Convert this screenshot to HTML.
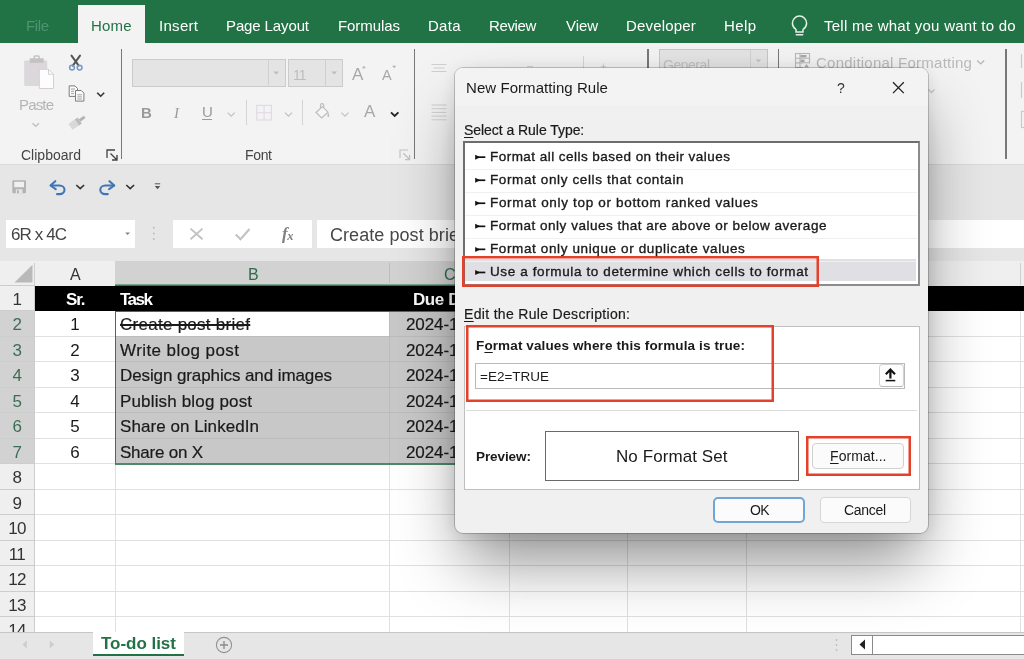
<!DOCTYPE html>
<html lang="en"><head><meta charset="utf-8"><title>New Formatting Rule</title>
<style>
html,body{margin:0;padding:0}
body{width:1024px;height:659px;overflow:hidden;background:#e6e6e6;position:relative;font-family:"Liberation Sans",sans-serif}
.a{position:absolute}
.t{position:absolute;white-space:pre;line-height:20px;height:20px;will-change:transform}
.t u{text-decoration-thickness:1px;text-underline-offset:2px}
svg{position:absolute;overflow:visible}
.hl{position:absolute;left:34px;width:990px;height:1px;background:#e0e0e0}
.vl{position:absolute;top:311px;width:1px;height:321px;background:#e0e0e0}
</style></head><body>
<!-- ===== header ===== -->
<div class="a" style="left:0;top:0;width:1024px;height:43px;background:#217346"></div>
<div class="a" style="left:77.5px;top:5px;width:67px;height:38px;background:#f3f3f3"></div>
<!-- ===== ribbon ===== -->
<div class="a" style="left:0;top:43px;width:1024px;height:121px;background:#f3f3f3;border-bottom:1px solid #dadada"></div>
<div class="a" style="left:120.5px;top:49px;width:1.5px;height:110px;background:#787878"></div>
<div class="a" style="left:413.5px;top:49px;width:1.5px;height:110px;background:#787878"></div>
<div class="a" style="left:647px;top:49px;width:1.5px;height:110px;background:#787878"></div>
<div class="a" style="left:777.5px;top:49px;width:1.5px;height:110px;background:#787878"></div>
<div class="a" style="left:1005px;top:49px;width:1.5px;height:110px;background:#787878"></div>
<!-- font boxes -->
<div class="a" style="left:132px;top:59px;width:154px;height:28px;background:#e4e4e4;border:1px solid #cbcbcb;box-sizing:border-box"></div>
<div class="a" style="left:268px;top:59px;width:1px;height:28px;background:#d0d0d0"></div>
<div class="a" style="left:288px;top:59px;width:55px;height:28px;background:#e4e4e4;border:1px solid #cbcbcb;box-sizing:border-box"></div>
<div class="a" style="left:325px;top:59px;width:1px;height:28px;background:#d0d0d0"></div>
<div class="a" style="left:659px;top:49px;width:109px;height:28px;background:#e3e3e3;border:1px solid #c6c6c6;box-sizing:border-box"></div>
<div class="a" style="left:750px;top:49.5px;width:1px;height:28px;background:#d0d0d0"></div>
<div class="a" style="left:245.5px;top:100px;width:1px;height:25px;background:#d4d4d4"></div>
<div class="a" style="left:302px;top:100px;width:1px;height:25px;background:#d4d4d4"></div>
<!-- ===== formula bar ===== -->
<div class="a" style="left:6px;top:219.5px;width:129px;height:28.5px;background:#fff"></div>
<div class="a" style="left:173px;top:219.5px;width:139px;height:28.5px;background:#fff"></div>
<div class="a" style="left:316.5px;top:219.5px;width:708px;height:28.5px;background:#fff"></div>
<!-- ===== grid ===== -->
<div class="a" style="left:34px;top:285px;width:990px;height:347px;background:#fff"></div>
<!-- col headers -->
<div class="a" style="left:0;top:261px;width:1024px;height:25px;background:#efefef"></div>
<div class="a" style="left:115px;top:261px;width:631px;height:23px;background:#d2d2d2"></div>
<div class="a" style="left:115px;top:284px;width:631px;height:1px;background:#7aa58f"></div><div class="a" style="left:115px;top:285px;width:631px;height:1px;background:#2f7a53"></div>
<div class="a" style="left:34px;top:263px;width:1px;height:22px;background:#cfcfcf"></div>
<div class="a" style="left:389px;top:263px;width:1px;height:20px;background:#bdbdbd"></div>
<div class="a" style="left:1019.5px;top:263px;width:1px;height:22px;background:#cfcfcf"></div>
<!-- row headers -->
<div class="a" style="left:0;top:285px;width:34.5px;height:347px;background:#efefef"></div>
<div class="a" style="left:0;top:311px;width:34px;height:153px;background:#d2d2d2"></div>
<div class="a" style="left:34px;top:311px;width:1px;height:153px;background:#2f7a53"></div>
<div class="hl" style="top:310px"></div>
<div class="a" style="left:0;top:310px;width:34px;height:1px;background:#cdcdcd"></div>
<div class="hl" style="top:336px"></div>
<div class="a" style="left:0;top:336px;width:34px;height:1px;background:#cdcdcd"></div>
<div class="hl" style="top:361px"></div>
<div class="a" style="left:0;top:361px;width:34px;height:1px;background:#cdcdcd"></div>
<div class="hl" style="top:387px"></div>
<div class="a" style="left:0;top:387px;width:34px;height:1px;background:#cdcdcd"></div>
<div class="hl" style="top:412px"></div>
<div class="a" style="left:0;top:412px;width:34px;height:1px;background:#cdcdcd"></div>
<div class="hl" style="top:438px"></div>
<div class="a" style="left:0;top:438px;width:34px;height:1px;background:#cdcdcd"></div>
<div class="hl" style="top:463px"></div>
<div class="a" style="left:0;top:463px;width:34px;height:1px;background:#cdcdcd"></div>
<div class="hl" style="top:489px"></div>
<div class="a" style="left:0;top:489px;width:34px;height:1px;background:#cdcdcd"></div>
<div class="hl" style="top:514px"></div>
<div class="a" style="left:0;top:514px;width:34px;height:1px;background:#cdcdcd"></div>
<div class="hl" style="top:540px"></div>
<div class="a" style="left:0;top:540px;width:34px;height:1px;background:#cdcdcd"></div>
<div class="hl" style="top:565px"></div>
<div class="a" style="left:0;top:565px;width:34px;height:1px;background:#cdcdcd"></div>
<div class="hl" style="top:591px"></div>
<div class="a" style="left:0;top:591px;width:34px;height:1px;background:#cdcdcd"></div>
<div class="hl" style="top:616px"></div>
<div class="a" style="left:0;top:616px;width:34px;height:1px;background:#cdcdcd"></div>
<div class="a" style="left:0;top:285px;width:34px;height:1px;background:#cdcdcd"></div>
<div class="vl" style="left:115px"></div>
<div class="vl" style="left:389px"></div>
<div class="vl" style="left:509px"></div>
<div class="vl" style="left:627px"></div>
<div class="vl" style="left:746px"></div>
<div class="vl" style="left:1019.5px"></div>
<div class="a" style="left:33.5px;top:285px;width:1px;height:347px;background:#cdcdcd"></div>
<!-- black header row -->
<div class="a" style="left:35px;top:286px;width:989px;height:25px;background:#000"></div>
<!-- selection -->
<div class="a" style="left:115px;top:311px;width:631px;height:153px;background:#c8c8c8"></div>
<div class="a" style="left:116px;top:311px;width:273px;height:25px;background:#fff"></div>
<div class="a" style="left:116px;top:336px;width:630px;height:1px;background:#bcbcbc"></div>
<div class="a" style="left:116px;top:361px;width:630px;height:1px;background:#bcbcbc"></div>
<div class="a" style="left:116px;top:387px;width:630px;height:1px;background:#bcbcbc"></div>
<div class="a" style="left:116px;top:412px;width:630px;height:1px;background:#bcbcbc"></div>
<div class="a" style="left:116px;top:438px;width:630px;height:1px;background:#bcbcbc"></div>
<div class="a" style="left:389px;top:311px;width:1px;height:152px;background:#bcbcbc"></div>
<div class="a" style="left:115px;top:311px;width:632px;height:154px;border:1px solid #2f7a53;border-bottom:2px solid #4d8a69;box-sizing:border-box"></div>
<span class="t" style="font-size:15px;color:#4f9371;letter-spacing:-0.39px;left:26.0px;top:15.5px;">File</span>
<span class="t" style="font-size:15px;color:#217346;letter-spacing:0.16px;left:91.0px;top:15.5px;">Home</span>
<span class="t" style="font-size:15px;color:#fff;letter-spacing:0.30px;left:159.3px;top:15.5px;">Insert</span>
<span class="t" style="font-size:15px;color:#fff;letter-spacing:-0.12px;left:226.3px;top:15.5px;">Page Layout</span>
<span class="t" style="font-size:15px;color:#fff;letter-spacing:-0.07px;left:338.3px;top:15.5px;">Formulas</span>
<span class="t" style="font-size:15px;color:#fff;letter-spacing:0.27px;left:428.2px;top:15.5px;">Data</span>
<span class="t" style="font-size:15px;color:#fff;letter-spacing:-0.38px;left:489.3px;top:15.5px;">Review</span>
<span class="t" style="font-size:15px;color:#fff;letter-spacing:-0.02px;left:565.7px;top:15.5px;">View</span>
<span class="t" style="font-size:15px;color:#fff;letter-spacing:0.18px;left:626.4px;top:15.5px;">Developer</span>
<span class="t" style="font-size:15px;color:#fff;letter-spacing:0.38px;left:724.0px;top:15.5px;">Help</span>
<span class="t" style="font-size:15px;color:#fff;letter-spacing:0.25px;left:824.0px;top:15.5px;">Tell me what you want to do</span>
<span class="t" style="font-size:15px;color:#b4b4b4;letter-spacing:-0.84px;left:19.0px;top:95.0px;">Paste</span>
<span class="t" style="font-size:14px;color:#444;letter-spacing:0.01px;left:20.5px;top:144.5px;">Clipboard</span>
<span class="t" style="font-size:14px;color:#444;letter-spacing:-0.34px;left:245.0px;top:144.5px;">Font</span>
<span class="t" style="font-size:14px;color:#bdbdbd;letter-spacing:-1.05px;left:292.5px;top:64.5px;">11</span>
<span class="t" style="font-size:15px;color:#9a9a9a;font-weight:700;letter-spacing:-1.34px;left:141.0px;top:102.5px;">B</span>
<span class="t" style="font-size:15px;color:#9a9a9a;font-style:italic;font-family:'Liberation Serif',serif;letter-spacing:1.00px;left:173.5px;top:102.5px;">I</span>
<span class="t" style="font-size:15px;color:#9a9a9a;text-decoration:underline;text-underline-offset:2px;letter-spacing:-0.84px;left:202.0px;top:102.0px;">U</span>
<span class="t" style="font-size:17px;color:#a8a8a8;letter-spacing:0.46px;left:364.4px;top:101.8px;">A</span>
<span class="t" style="font-size:17px;color:#a8a8a8;letter-spacing:-0.84px;left:352.0px;top:64.5px;">A</span>
<span class="t" style="font-size:14.5px;color:#a8a8a8;letter-spacing:-0.07px;left:382.4px;top:64.7px;">A</span>
<span class="t" style="font-size:14px;color:#bfbfbf;letter-spacing:-0.47px;left:663.0px;top:54.5px;">General</span>
<span class="t" style="font-size:15px;color:#b9b9b9;letter-spacing:0.24px;left:816.0px;top:53.0px;">Conditional Formatting</span>
<span class="t" style="font-size:17px;color:#444;letter-spacing:-0.90px;left:11.0px;top:224.5px;">6R x 4C</span>
<span class="t" style="font-size:18px;color:#484848;letter-spacing:0.06px;left:330.0px;top:224.5px;">Create post brief</span>
<span class="t" style="font-size:16px;color:#333;left:70.3px;top:264.5px;">A</span>
<span class="t" style="font-size:16px;color:#2f6b4c;left:247.8px;top:264.5px;">B</span>
<span class="t" style="font-size:16px;color:#2f6b4c;left:443.5px;top:264.5px;">C</span>
<span class="t" style="font-size:17px;color:#333;letter-spacing:-0.6px;left:17.0px;width:60px;margin-left:-30px;text-align:center;top:289.8px;">1</span>
<span class="t" style="font-size:17px;color:#3a6f55;letter-spacing:-0.6px;left:17.0px;width:60px;margin-left:-30px;text-align:center;top:315.2px;">2</span>
<span class="t" style="font-size:17px;color:#3a6f55;letter-spacing:-0.6px;left:17.0px;width:60px;margin-left:-30px;text-align:center;top:340.8px;">3</span>
<span class="t" style="font-size:17px;color:#3a6f55;letter-spacing:-0.6px;left:17.0px;width:60px;margin-left:-30px;text-align:center;top:366.2px;">4</span>
<span class="t" style="font-size:17px;color:#3a6f55;letter-spacing:-0.6px;left:17.0px;width:60px;margin-left:-30px;text-align:center;top:391.8px;">5</span>
<span class="t" style="font-size:17px;color:#3a6f55;letter-spacing:-0.6px;left:17.0px;width:60px;margin-left:-30px;text-align:center;top:417.2px;">6</span>
<span class="t" style="font-size:17px;color:#3a6f55;letter-spacing:-0.6px;left:17.0px;width:60px;margin-left:-30px;text-align:center;top:442.8px;">7</span>
<span class="t" style="font-size:17px;color:#333;letter-spacing:-0.6px;left:17.0px;width:60px;margin-left:-30px;text-align:center;top:468.2px;">8</span>
<span class="t" style="font-size:17px;color:#333;letter-spacing:-0.6px;left:17.0px;width:60px;margin-left:-30px;text-align:center;top:493.8px;">9</span>
<span class="t" style="font-size:17px;color:#333;letter-spacing:-0.6px;left:17.0px;width:60px;margin-left:-30px;text-align:center;top:519.2px;">10</span>
<span class="t" style="font-size:17px;color:#333;letter-spacing:-0.6px;left:17.0px;width:60px;margin-left:-30px;text-align:center;top:544.8px;">11</span>
<span class="t" style="font-size:17px;color:#333;letter-spacing:-0.6px;left:17.0px;width:60px;margin-left:-30px;text-align:center;top:570.2px;">12</span>
<span class="t" style="font-size:17px;color:#333;letter-spacing:-0.6px;left:17.0px;width:60px;margin-left:-30px;text-align:center;top:595.8px;">13</span>
<span class="t" style="font-size:17px;color:#333;letter-spacing:-0.6px;left:17.0px;width:60px;margin-left:-30px;text-align:center;top:621.2px;">14</span>
<span class="t" style="font-size:17px;color:#fff;font-weight:700;letter-spacing:-1.12px;left:65.5px;top:289.8px;">Sr.</span>
<span class="t" style="font-size:17px;color:#fff;font-weight:700;letter-spacing:-1.50px;left:120.0px;top:289.8px;">Task</span>
<span class="t" style="font-size:17px;color:#fff;font-weight:700;letter-spacing:-0.41px;left:412.6px;top:289.8px;">Due D</span>
<span class="t" style="font-size:17px;color:#1a1a1a;text-decoration:line-through;text-decoration-thickness:1.5px;-webkit-text-stroke:0.2px #1a1a1a;letter-spacing:0.27px;left:119.5px;top:315.2px;">Create post brief</span>
<span class="t" style="font-size:17px;color:#1a1a1a;left:75.0px;width:60px;margin-left:-30px;text-align:center;top:315.2px;">1</span>
<span class="t" style="font-size:17px;color:#1a1a1a;-webkit-text-stroke:0.2px #1a1a1a;letter-spacing:-0.09px;left:406.3px;top:315.2px;">2024-1</span>
<span class="t" style="font-size:17px;color:#1a1a1a;-webkit-text-stroke:0.2px #1a1a1a;letter-spacing:0.42px;left:119.5px;top:340.8px;">Write blog post</span>
<span class="t" style="font-size:17px;color:#1a1a1a;left:75.0px;width:60px;margin-left:-30px;text-align:center;top:340.8px;">2</span>
<span class="t" style="font-size:17px;color:#1a1a1a;-webkit-text-stroke:0.2px #1a1a1a;letter-spacing:-0.09px;left:406.3px;top:340.8px;">2024-1</span>
<span class="t" style="font-size:17px;color:#1a1a1a;-webkit-text-stroke:0.2px #1a1a1a;letter-spacing:-0.10px;left:119.5px;top:366.2px;">Design graphics and images</span>
<span class="t" style="font-size:17px;color:#1a1a1a;left:75.0px;width:60px;margin-left:-30px;text-align:center;top:366.2px;">3</span>
<span class="t" style="font-size:17px;color:#1a1a1a;-webkit-text-stroke:0.2px #1a1a1a;letter-spacing:-0.09px;left:406.3px;top:366.2px;">2024-1</span>
<span class="t" style="font-size:17px;color:#1a1a1a;-webkit-text-stroke:0.2px #1a1a1a;letter-spacing:0.16px;left:119.5px;top:391.8px;">Publish blog post</span>
<span class="t" style="font-size:17px;color:#1a1a1a;left:75.0px;width:60px;margin-left:-30px;text-align:center;top:391.8px;">4</span>
<span class="t" style="font-size:17px;color:#1a1a1a;-webkit-text-stroke:0.2px #1a1a1a;letter-spacing:-0.09px;left:406.3px;top:391.8px;">2024-1</span>
<span class="t" style="font-size:17px;color:#1a1a1a;-webkit-text-stroke:0.2px #1a1a1a;letter-spacing:0.06px;left:119.5px;top:417.2px;">Share on LinkedIn</span>
<span class="t" style="font-size:17px;color:#1a1a1a;left:75.0px;width:60px;margin-left:-30px;text-align:center;top:417.2px;">5</span>
<span class="t" style="font-size:17px;color:#1a1a1a;-webkit-text-stroke:0.2px #1a1a1a;letter-spacing:-0.09px;left:406.3px;top:417.2px;">2024-1</span>
<span class="t" style="font-size:17px;color:#1a1a1a;-webkit-text-stroke:0.2px #1a1a1a;letter-spacing:-0.23px;left:119.5px;top:442.8px;">Share on X</span>
<span class="t" style="font-size:17px;color:#1a1a1a;left:75.0px;width:60px;margin-left:-30px;text-align:center;top:442.8px;">6</span>
<span class="t" style="font-size:17px;color:#1a1a1a;-webkit-text-stroke:0.2px #1a1a1a;letter-spacing:-0.09px;left:406.3px;top:442.8px;">2024-1</span>
<!-- sheet tab bar -->
<div class="a" style="left:0;top:631.5px;width:1024px;height:28px;background:#e6e6e6;border-top:1px solid #c6c6c6;box-sizing:border-box"></div>
<div class="a" style="left:93px;top:631.5px;width:91px;height:22.5px;background:#fff;border-bottom:2.5px solid #217346"></div>
<div class="a" style="left:851px;top:634.5px;width:180px;height:20px;background:#fff;border:1px solid #8a8a8a;box-sizing:border-box"></div>
<div class="a" style="left:872px;top:635px;width:1px;height:20px;background:#8a8a8a"></div>
<svg width="1024" height="659" viewBox="0 0 1024 659" style="left:0;top:0" fill="none">
<!-- bulb -->
<g stroke="#e4f0e9" stroke-width="1.5" fill="none" stroke-linecap="round">
<path d="M796 29.5c-2.2-1.6-3.6-3.9-3.6-6.3a7.1 7.1 0 0 1 14.2 0c0 2.4-1.4 4.700-3.600 6.300v2.500h-7z"/>
<path d="M796.300 34.800h6.400"/>
</g>
<!-- paste -->
<rect x="24.200" y="60.500" width="23" height="25.500" rx="1" fill="#dbd7db"/>
<rect x="29.700" y="58.300" width="14" height="4.500" fill="#c4c2c4"/>
<rect x="34.200" y="56" width="5" height="4" rx="1" fill="none" stroke="#c4c2c4" stroke-width="1.400"/>
<path d="M39.300 69.300h9.200l5 5v14.200h-14.200z" fill="#fdfdfd" stroke="#d2d0d4" stroke-width="1"/>
<path d="M48.500 69.300v5h5" stroke="#d2d0d4" stroke-width="1" fill="none"/>
<path d="M32.500 123.200l3.200 3.200 3.200-3.200" stroke="#bdbdbd" stroke-width="1.300"/>
<!-- scissors -->
<path d="M71.500 55.600l7.200 10M80 55.600l-7.200 10" stroke="#555" stroke-width="2" stroke-linecap="round"/>
<circle cx="72" cy="67.600" r="2.400" stroke="#7398cc" stroke-width="1.500"/>
<circle cx="79.600" cy="67.600" r="2.400" stroke="#7398cc" stroke-width="1.500"/>
<!-- copy -->
<path d="M69.200 85.900h5.800l2.500 2.500v8h-8.300z" fill="#fafafa" stroke="#7c7c7c" stroke-width="1"/>
<path d="M75.500 90.500h5.800l2.600 2.600v8h-8.400z" fill="#fafafa" stroke="#7c7c7c" stroke-width="1"/>
<path d="M71 89h4M71 91.300h3M71 93.600h3M77.300 94.800h4.600M77.300 96.900h4.600M77.300 99h4.600" stroke="#8a8a8a" stroke-width=".8"/>
<path d="M97.200 92.700l3.500 3.500 3.500-3.500" stroke="#333" stroke-width="1.600"/>
<!-- format painter (disabled) -->
<path d="M68.500 124l7-5.200 4.200 6.200-7.200 4.800z" fill="#d8d8d8"/>
<path d="M75 119.300l2.600-1.900 4.200 6.200-2.600 1.900z" fill="#bcbcbc"/>
<path d="M78.800 119.300l5-3.600 1.700 2.400-5 3.600z" fill="#b4b4b4"/>
<!-- launchers -->
<path d="M107 158v-8h8" stroke="#444" stroke-width="1.300"/>
<path d="M110.500 153.500l6 6M117 155v5h-5" stroke="#444" stroke-width="1.400"/>
<path d="M400 158v-8h8" stroke="#c3c3c3" stroke-width="1.200"/>
<path d="M403.300 153.300l6 6M409.600 155v4.600h-4.600" stroke="#c3c3c3" stroke-width="1.300"/>
<!-- font box arrows -->
<path d="M273.300 71.500h5.800l-2.900 3z" fill="#bdbdbd"/>
<path d="M331.300 71.500h5.800l-2.900 3z" fill="#bdbdbd"/>
<path d="M755.500 59.500h5.800l-2.900 3z" fill="#c4c4c4"/>
<!-- A carets -->
<path d="M362 68.300l1.900-2.500 1.900 2.500z" fill="#b0b0b0"/>
<path d="M392.200 65.800h4l-2 2.400z" fill="#b0b0b0"/>
<!-- chevrons row 2 -->
<path d="M227.700 112.600l3.500 3.500 3.500-3.500" stroke="#c2c2c2" stroke-width="1.300"/>
<path d="M285 112.600l3.500 3.500 3.500-3.500" stroke="#c2c2c2" stroke-width="1.300"/>
<path d="M341.500 112.600l3.500 3.500 3.500-3.500" stroke="#c2c2c2" stroke-width="1.300"/>
<path d="M391 112.300l3.700 3.700 3.700-3.700" stroke="#222" stroke-width="1.800"/>
<!-- borders icon -->
<g stroke="#e0d8e4" stroke-width="1.100">
<rect x="256.800" y="105.400" width="14.600" height="14.600"/>
<path d="M264.100 105.400v14.600M256.800 112.700h14.600"/>
</g>
<!-- fill bucket -->
<g stroke="#bdbdbd" stroke-width="1.200" fill="none">
<path d="M316 112.500l6.500-6 5.500 5.700-6.300 5.800z" fill="#f6f6f6"/>
<path d="M320.500 108.500v-3.200a1.600 1.600 0 0 1 3.200 0v2.500"/>
<path d="M328.300 113.500v3.500" stroke-width="1.500"/>
</g>
<!-- align icons -->
<g stroke="#cfcfcf" stroke-width="1">
<path d="M431.500 64.500h15M433.500 68h11M431.500 71.500h15"/>
<path d="M431.500 105h15M431.500 108.700h15M431.500 112.400h15M431.500 116.100h15M431.500 119.800h15"/>
</g>
<!-- conditional formatting icon -->
<g stroke="#b9b9b9" stroke-width="1.100" fill="none">
<rect x="795.500" y="53.500" width="14" height="14"/>
<path d="M800 53.500v14M795.500 58.200h14M795.500 62.900h14"/>
</g>
<rect x="800.500" y="55" width="6" height="2.400" fill="#a9a9a9"/>
<rect x="800.500" y="59.600" width="4" height="2.400" fill="#a9a9a9"/>
<rect x="803" y="63.500" width="7.500" height="5" fill="#f3f3f3"/>
<path d="M804 67.500l2.500-3.500 2.500 3.500z" fill="#b0b0b0"/>
<path d="M977.200 60.500l3.500 3.400 3.500-3.400" stroke="#b5b5b5" stroke-width="1.300"/>
<path d="M928.500 89.500l3 3 3-3" stroke="#c5c5c5" stroke-width="1.300"/>
<!-- right edge partial icons -->
<g stroke="#c9c9c9" stroke-width="1.200">
<path d="M1021.500 54v14M1021.500 82v16"/>
<rect x="1021.500" y="111.500" width="8" height="16"/>
</g>
<!-- ribbon thin lines near number group -->
<path d="M583.500 56v12" stroke="#d6d6d6" stroke-width="1"/>
<path d="M527 66.500h6M603.500 63.500v5M601 66.500h5" stroke="#d0d0d0" stroke-width="1"/>
<!-- QAT: save -->
<rect x="12.300" y="180.300" width="13.700" height="13" rx="1" fill="#b4b4b4"/>
<rect x="14.300" y="181.800" width="9.700" height="5.400" fill="#f0f0f0"/>
<rect x="15.800" y="189.300" width="6.600" height="4" fill="#e6e6e6"/>
<rect x="17" y="190" width="1.800" height="3.300" fill="#b4b4b4"/>
<!-- undo / redo -->
<g stroke="#3f76b5" stroke-width="2.100" fill="none" stroke-linecap="round" stroke-linejoin="round">
<path d="M55.300 181.200l-4.800 4.300 5.200 3.600"/>
<path d="M51 185.500h8.500a5 4.300 0 0 1 0 8.600h-2.500"/>
<path d="M109.500 181.200l4.800 4.300-5.200 3.600"/>
<path d="M113.800 185.500h-8.500a5 4.300 0 0 0 0 8.600h2.500"/>
</g>
<path d="M76.300 185l3.900 3.700 3.900-3.700" stroke="#333" stroke-width="1.600"/>
<path d="M126.300 185l3.900 3.700 3.900-3.700" stroke="#333" stroke-width="1.600"/>
<path d="M154.800 183.800h5.400" stroke="#555" stroke-width="1"/>
<path d="M154.800 186h5.400l-2.700 3.300z" fill="#555"/>
<!-- name box arrow + dots -->
<path d="M125.200 232.400h4.800l-2.400 2.700z" fill="#808080"/>
<circle cx="153.800" cy="227.700" r="1" fill="#bdbdbd"/><circle cx="153.800" cy="233.500" r="1" fill="#bdbdbd"/><circle cx="153.800" cy="239" r="1" fill="#bdbdbd"/>
<!-- formula X and check -->
<path d="M190.500 228.600l12 10.600M202.500 228.600l-12 10.600" stroke="#c2c2c2" stroke-width="1.900"/>
<path d="M235.800 234.500l4.700 4.700 9-10.200" stroke="#c2c2c2" stroke-width="2.100"/>
<!-- select all triangle -->
<path d="M32.500 264.800v17.700h-18z" fill="#b9b9b9"/>
<!-- sheet nav -->
<path d="M26.800 640.500v8l-4.300-4z" fill="#cdcdcd"/>
<path d="M49.800 640.500v8l4.300-4z" fill="#cdcdcd"/>
<circle cx="224" cy="645" r="7.600" stroke="#929292" stroke-width="1.100"/>
<path d="M220 645h8M224 641v8" stroke="#8a8a8a" stroke-width="1.300"/>
<!-- scrollbar -->
<path d="M865 639.500v10l-5.500-5z" fill="#222"/>
<circle cx="836.500" cy="640" r=".9" fill="#bdbdbd"/><circle cx="836.500" cy="645" r=".9" fill="#bdbdbd"/><circle cx="836.500" cy="650" r=".9" fill="#bdbdbd"/>
</svg>
<span class="t" style="left:281.500px;top:223.500px;font-family:'Liberation Serif',serif;font-style:italic;font-weight:700;font-size:17px;color:#808080;letter-spacing:-0.500px">f<span style="font-size:12.500px;position:relative;top:0.500px">x</span></span>

<span class="t" style="font-size:17px;color:#217346;font-weight:700;letter-spacing:-0.03px;left:101.0px;top:634.0px;">To-do list</span>
<!-- ===== dialog ===== -->
<div class="a" style="left:454.5px;top:68px;width:473.5px;height:464.5px;background:#f0f0f0;border-radius:8px;box-shadow:0 36px 60px -8px rgba(0,0,0,.44),0 2px 18px rgba(0,0,0,.10),0 0 0 1px rgba(0,0,0,.2)"></div>
<div class="a" style="left:454.5px;top:68px;width:473.5px;height:38px;background:#f3f3f3;border-radius:8px 8px 0 0"></div>
<!-- listbox -->
<div class="a" style="left:463px;top:140.5px;width:456.5px;height:145px;background:#fff;border:2px solid #6e6e6e;border-right-color:#8c8c8c;border-bottom-color:#8c8c8c;box-sizing:border-box"></div>
<div class="a" style="left:465px;top:259px;width:451px;height:22px;background:#dfdfe4"></div>
<div class="a" style="left:465px;top:168.6px;width:452px;height:1px;background:#f0f0f0"></div>
<div class="a" style="left:465px;top:191.6px;width:452px;height:1px;background:#f0f0f0"></div>
<div class="a" style="left:465px;top:214.7px;width:452px;height:1px;background:#f0f0f0"></div>
<div class="a" style="left:465px;top:237.7px;width:452px;height:1px;background:#f0f0f0"></div>
<div class="a" style="left:465px;top:260.8px;width:452px;height:1px;background:#f0f0f0"></div>
<svg width="357" height="31" style="left:462px;top:256px"><rect x="1.25" y="1.25" width="354.50" height="28.50" fill="none" stroke="#e4402a" stroke-width="2.5"/></svg>
<!-- edit panel -->
<div class="a" style="left:464px;top:326px;width:455.5px;height:164px;background:#fff;border:1px solid #bfbfbf;box-sizing:border-box"></div>
<div class="a" style="left:474.5px;top:362.5px;width:430.5px;height:26.5px;background:#fff;border:1px solid #b9b9b9;box-sizing:border-box"></div>
<div class="a" style="left:878.5px;top:364px;width:25px;height:23px;background:#fdfdfd;border:1px solid #d2d2d2;border-bottom-color:#b8b8b8;border-radius:3.5px;box-sizing:border-box"></div>
<div class="a" style="left:466px;top:409.5px;width:451px;height:1px;background:#dcdcdc"></div>
<svg width="308" height="77" style="left:466px;top:325px"><rect x="1.25" y="1.25" width="305.50" height="74.50" fill="none" stroke="#e4402a" stroke-width="2.5"/></svg>
<div class="a" style="left:544.5px;top:431px;width:254.5px;height:50px;background:#fff;border:1px solid #6a6a6a;box-sizing:border-box"></div>
<div class="a" style="left:812px;top:443px;width:92px;height:26px;background:#fbfbfb;border:1px solid #d0d0d0;border-radius:4px;box-sizing:border-box"></div>
<svg width="105" height="40" style="left:806px;top:436px"><rect x="1.25" y="1.25" width="102.50" height="37.50" fill="none" stroke="#e4402a" stroke-width="2.5"/></svg>
<div class="a" style="left:712.5px;top:497px;width:92.5px;height:25.5px;background:#fbfbfb;border:2px solid #6fa6d8;border-radius:5px;box-sizing:border-box"></div>
<div class="a" style="left:819.5px;top:497px;width:91.5px;height:25.5px;background:#fbfbfb;border:1px solid #d6d6d6;border-radius:4px;box-sizing:border-box"></div>
<svg width="1024" height="659" viewBox="0 0 1024 659" style="left:0;top:0" fill="none">
<path d="M893 82.300l10.800 10.800M903.800 82.300l-10.800 10.800" stroke="#222" stroke-width="1.300"/>
<!-- collapse dialog arrow -->
<path d="M885.800 374.300l4.600-4.700 4.600 4.700M890.400 370.200v8.200" stroke="#111" stroke-width="2.200" stroke-linejoin="miter"/>
<path d="M885.700 380.600h9.600" stroke="#111" stroke-width="1.500"/>
<!-- list arrows -->
<path d="M475.200 154.7l5 2.500-5 2.500z" fill="#111"/><path d="M478 156.3h7.300v1.700h-7.300z" fill="#111"/>
<path d="M475.200 177.8l5 2.500-5 2.500z" fill="#111"/><path d="M478 179.4h7.300v1.700h-7.300z" fill="#111"/>
<path d="M475.200 200.8l5 2.500-5 2.500z" fill="#111"/><path d="M478 202.4h7.300v1.700h-7.300z" fill="#111"/>
<path d="M475.200 223.8l5 2.500-5 2.500z" fill="#111"/><path d="M478 225.5h7.300v1.700h-7.300z" fill="#111"/>
<path d="M475.200 246.9l5 2.500-5 2.500z" fill="#111"/><path d="M478 248.5h7.300v1.700h-7.300z" fill="#111"/>
<path d="M475.200 269.9l5 2.500-5 2.500z" fill="#111"/><path d="M478 271.6h7.300v1.700h-7.300z" fill="#111"/>
</svg>

<span class="t" style="font-size:15px;color:#1a1a1a;letter-spacing:0.06px;left:465.5px;top:77.5px;">New Formatting Rule</span>
<span class="t" style="font-size:14px;color:#333;left:837.0px;top:77.5px;">?</span>
<span class="t" style="font-size:14px;color:#1a1a1a;-webkit-text-stroke:0.2px #1a1a1a;letter-spacing:-0.05px;left:463.8px;top:119.5px;"><u>S</u>elect a Rule Type:</span>
<span class="t" style="font-size:13.5px;color:#1a1a1a;-webkit-text-stroke:0.35px #1a1a1a;letter-spacing:0.46px;left:490.0px;top:147.0px;">Format all cells based on their values</span>
<span class="t" style="font-size:13.5px;color:#1a1a1a;-webkit-text-stroke:0.35px #1a1a1a;letter-spacing:0.62px;left:490.0px;top:170.1px;">Format only cells that contain</span>
<span class="t" style="font-size:13.5px;color:#1a1a1a;-webkit-text-stroke:0.35px #1a1a1a;letter-spacing:0.67px;left:490.0px;top:193.1px;">Format only top or bottom ranked values</span>
<span class="t" style="font-size:13.5px;color:#1a1a1a;-webkit-text-stroke:0.35px #1a1a1a;letter-spacing:0.51px;left:490.0px;top:216.2px;">Format only values that are above or below average</span>
<span class="t" style="font-size:13.5px;color:#1a1a1a;-webkit-text-stroke:0.35px #1a1a1a;letter-spacing:0.62px;left:490.0px;top:239.2px;">Format only unique or duplicate values</span>
<span class="t" style="font-size:13.5px;color:#1a1a1a;-webkit-text-stroke:0.35px #1a1a1a;letter-spacing:0.62px;left:490.0px;top:262.2px;">Use a formula to determine which cells to format</span>
<span class="t" style="font-size:14px;color:#1a1a1a;-webkit-text-stroke:0.2px #1a1a1a;letter-spacing:0.32px;left:464.0px;top:304.0px;"><u>E</u>dit the Rule Description:</span>
<span class="t" style="font-size:13.5px;color:#1a1a1a;font-weight:700;letter-spacing:0.12px;left:476.0px;top:336.0px;">F<u>o</u>rmat values where this formula is true:</span>
<span class="t" style="font-size:13.5px;color:#1a1a1a;letter-spacing:-0.00px;left:480.0px;top:366.5px;">=E2=TRUE</span>
<span class="t" style="font-size:13.5px;color:#1a1a1a;font-weight:700;letter-spacing:-0.08px;left:476.0px;top:447.0px;">Preview:</span>
<span class="t" style="font-size:17px;color:#1a1a1a;letter-spacing:0.08px;left:616.0px;top:446.5px;">No Format Set</span>
<span class="t" style="font-size:14px;color:#1a1a1a;letter-spacing:0.06px;left:829.5px;top:446.0px;"><u>F</u>ormat...</span>
<span class="t" style="font-size:14px;color:#1a1a1a;letter-spacing:-0.73px;left:749.5px;top:500.0px;">OK</span>
<span class="t" style="font-size:14px;color:#1a1a1a;letter-spacing:-0.28px;left:843.8px;top:500.0px;">Cancel</span>
</body></html>
